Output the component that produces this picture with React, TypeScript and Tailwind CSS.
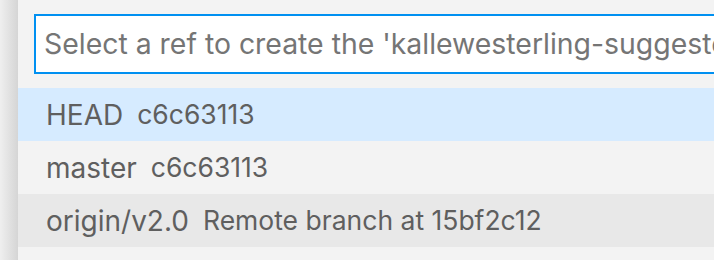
import React from "react";

const rows = [
  { label: "HEAD", desc: "c6c63113", bg: "bg-[#d6ebff]" },
  { label: "master", desc: "c6c63113", bg: "bg-[#f3f3f3]" },
  { label: "origin/v2.0", desc: "Remote branch at 15bf2c12", bg: "bg-[#e8e8e8]" },
];

export default function App() {
  return (
    <div
      className="flex w-[714px] h-[260px] overflow-hidden bg-[#f3f3f3]"
      style={{ fontFamily: "Inter, 'Noto Sans', sans-serif" }}
    >
      <div className="w-[18px] shrink-0 bg-gradient-to-r from-[#efefef] to-[#d5d5d5]" />
      <div className="flex-1 min-w-0 flex flex-col overflow-hidden">
        <div className="pt-[14px] pl-[16px] pb-[14px]">
          <div className="w-[760px] h-[60px] border-2 border-[#0090f1] bg-white flex items-center pl-[8px] whitespace-nowrap overflow-hidden">
            <span className="text-[28.4px] text-[#757575]">
              Select a ref to create the 'kallewesterling-suggested-branch' branch on
            </span>
          </div>
        </div>
        {rows.map((r) => (
          <div
            key={r.label}
            className={`h-[53px] shrink-0 flex items-center pl-[28px] whitespace-nowrap ${r.bg}`}
          >
            <span className="text-[28px] text-[#5f5f5f]">{r.label}</span>
            <span className="ml-[14px] text-[26.5px] text-[#5f5f5f]">{r.desc}</span>
          </div>
        ))}
      </div>
    </div>
  );
}
